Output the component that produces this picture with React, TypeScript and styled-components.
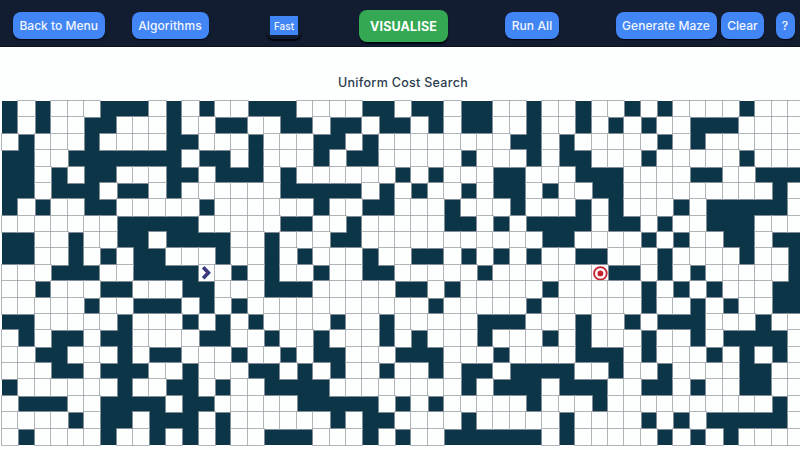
import React from 'react';
import styled, { createGlobalStyle, css } from 'styled-components';

const GlobalStyle = createGlobalStyle`
  * { box-sizing: border-box; }
  body {
    margin: 0;
    overflow: hidden;
    background: #fdfefe;
    font-family: Inter, "Open Sans", sans-serif;
  }
`;

const Page = styled.div`
  width: 800px;
  height: 450px;
  overflow: hidden;
  display: flex;
  flex-direction: column;
`;

const Toolbar = styled.header`
  flex: none;
  height: 47px;
  padding: 9px 5px 0 12.5px;
  display: flex;
  align-items: flex-start;
  background: #131d31;
  border-bottom: 1px solid #0c1424;
`;

const Button = styled.button<{ $width: number; $gap?: number; $spacing?: number }>`
  flex: none;
  width: ${p => p.$width}px;
  height: 27px;
  margin: 3px 0 0 ${p => p.$gap ?? 0}px;
  padding: 0;
  border: 0;
  border-radius: 8px;
  background: #4285f4;
  color: #f0f5ff;
  font: 500 12px/28px Inter, sans-serif;
  letter-spacing: ${p => p.$spacing ?? 0}px;
  text-align: center;
  white-space: nowrap;
  box-shadow: 0 1px 1px #03070f;
`;

const PrimaryButton = styled(Button)`
  height: 32px;
  margin-top: 1px;
  background: #34a853;
  color: #fff;
  font-size: 12.5px;
  font-weight: 700;
  line-height: 33px;
  box-shadow: 0 1.5px 1px #03070f;
`;

const SpeedSelect = styled.div`
  flex: none;
  width: 36px;
  height: 27px;
  margin: 3px 0 0 57.5px;
  padding: 4px 4px 0;
  border-radius: 8px;
  box-shadow: 0 1.5px 1px #03070f;
`;

const SpeedValue = styled.div`
  height: 19px;
  background: #4285f4;
  color: #f0f5ff;
  font: 500 10px/20px Inter, sans-serif;
  text-align: center;
`;

const Title = styled.h1`
  flex: none;
  height: 54px;
  margin: 0;
  padding: 27px 0 0 6px;
  color: #2a3c4c;
  font: 500 12.5px/17px Inter, sans-serif;
  letter-spacing: 0.3px;
  text-align: center;
`;

const Board = styled.main`
  flex: none;
  width: 802.62px;
  margin-left: 2px;
  display: grid;
  grid-template-columns: repeat(49, 16.38px);
  grid-auto-rows: 16.38px;
`;

const Cell = styled.div<{ $wall: boolean }>`
  display: flex;
  align-items: center;
  justify-content: center;
  ${p =>
    p.$wall
      ? css`
          background: #0c3547;
        `
      : css`
          background: #fdfefe;
          position: relative;
          box-shadow: 0 0 0 0.8px #9fa3aa;
        `}
`;

const Glyph = styled.svg`
  display: block;
  flex: none;
`;

const START = { row: 10, col: 12 };
const TARGET = { row: 10, col: 36 };
const COLUMNS = 49;

/* Wall columns of each row; "a-b" is an inclusive run. */
const WALLS = [
  '0 2 6-8 10 12 15-17 22-23 25-26 28-29 32 35 38 40 45',
  '0 2 5-6 10 13-14 17-18 20-21 23-24 26 28-29 32 35 37 39 42-44',
  '1 5 10-11 15 19-20 22 31-32 34 40 42',
  '0-1 4-10 12-13 15 19 21-22 28 32 34-35 39 45',
  '0-1 3 5-6 10-11 13-15 17 24 26 30-31 35-37 42-43 46-48',
  '0-1 3-5 7-8 10 17-21 23 25 28 30-31 33 36-37 47',
  '0 2 5-6 12 19 22-23 27 31 35 37 41 43-47',
  '7-11 17-18 21 27-28 30 32-35 37-38 40 43-45',
  '0-1 4 7-8 10-13 16 20-21 33-34 39 41 44-45 47-48',
  '0-1 4 6 8-9 13 16 18 22 25-26 28 30 32 35-36 40 45 48',
  '3-5 8-11 14 16 19 22-23 29 37-38 40 42 48',
  '2 6-7 11-12 16-18 24-25 27 33 39 41 43 47-48',
  '5 8-10 12 14 26 32 39 42 44 47-48',
  '0-1 7 11 13 15 20 23 29-31 35 38 40-42 46',
  '1 3-4 6-7 12-13 16 19 23 25 29 33 35 39 42 44-47',
  '2-3 7 9-10 14 17 19-20 24-26 30 35-37 39 43 45 47',
  '3-4 6-8 11 15-16 18 20 23 26 28-29 31-34 37 40 45-46',
  '0 7 10-11 13 16-19 28 30-32 34-36 39-40 42 45-46',
  '1-3 6-9 11-12 18-22 24 26 32 36 47',
  '4 6-7 9-11 13 20 22-23 28 34 39 41 43-47',
  '1 6 9 11 13 16-18 22 24 27-32 34 40 42 44',
].map(row => {
  const walls = new Set<number>();
  row.split(' ').forEach(run => {
    const [from, to = from] = run.split('-').map(Number);
    for (let col = from; col <= to; col++) walls.add(col);
  });
  return walls;
});

const StartIcon = () => (
  <Glyph width="15" height="15" viewBox="0 0 15 15">
    <path d="M4.2 2.2 L9.4 7.7 L4.2 13.2" fill="none" stroke="#283a86" strokeWidth="3.6" />
    <path d="M4.6 2.8 L9.2 7.7 L4.6 12.6" fill="none" stroke="#a02a55" strokeWidth="1.1" strokeDasharray="1.2 1.4" />
  </Glyph>
);

const TargetIcon = () => (
  <Glyph width="16" height="16" viewBox="0 0 16 16">
    <circle cx="8.4" cy="8.4" r="6.3" fill="#fff" stroke="#c5202d" strokeWidth="1.8" />
    <circle cx="8.4" cy="8.4" r="2.9" fill="#c5202d" />
  </Glyph>
);

export default function App() {
  return (
    <>
      <GlobalStyle />
      <Page>
        <Toolbar>
          <Button $width={92.5} $spacing={0.03}>Back to Menu</Button>
          <Button $width={77} $gap={26.5} $spacing={0.12}>Algorithms</Button>
          <SpeedSelect>
            <SpeedValue>Fast</SpeedValue>
          </SpeedSelect>
          <PrimaryButton $width={89} $gap={57} $spacing={0.15}>VISUALISE</PrimaryButton>
          <Button $width={54} $gap={57} $spacing={0.1}>Run All</Button>
          <Button $width={101} $gap={56.5} $spacing={0.05}>Generate Maze</Button>
          <Button $width={43} $gap={4.5}>Clear</Button>
          <Button $width={19} $gap={11.5}>?</Button>
        </Toolbar>
        <Title>Uniform Cost Search</Title>
        <Board>
          {WALLS.map((walls, row) =>
            Array.from({ length: COLUMNS }, (_, col) => (
              <Cell key={`${row}-${col}`} $wall={walls.has(col)}>
                {row === START.row && col === START.col && <StartIcon />}
                {row === TARGET.row && col === TARGET.col && <TargetIcon />}
              </Cell>
            )),
          )}
        </Board>
      </Page>
    </>
  );
}
